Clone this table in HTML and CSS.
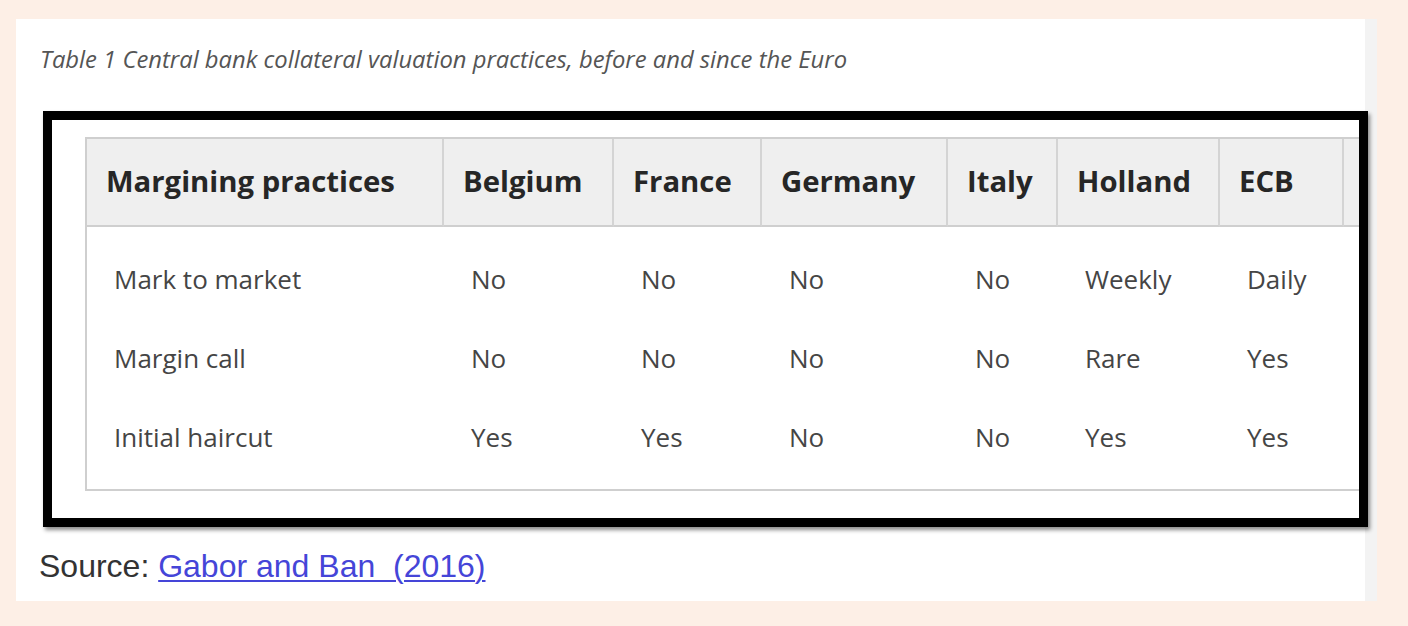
FILE: index.html
```html
<!DOCTYPE html>
<html lang="en">
<head>
<meta charset="utf-8">
<title>Central bank collateral valuation practices</title>
<link rel="stylesheet" href="styles.css">
</head>
<body>
<div class="card">
  <p class="caption">Table 1 Central bank collateral valuation practices, before and since the Euro</p>
  <div class="frame">
    <table class="practices">
      <colgroup>
        <col class="c1"><col class="c2"><col class="c3"><col class="c4"><col class="c5"><col class="c6"><col class="c7"><col class="c8">
      </colgroup>
      <thead>
        <tr>
          <th>Margining practices</th>
          <th>Belgium</th>
          <th>France</th>
          <th>Germany</th>
          <th>Italy</th>
          <th>Holland</th>
          <th>ECB</th>
          <th></th>
        </tr>
      </thead>
      <tbody>
        <tr class="first">
          <td>Mark to market</td><td>No</td><td>No</td><td>No</td><td>No</td><td>Weekly</td><td>Daily</td><td></td>
        </tr>
        <tr>
          <td>Margin call</td><td>No</td><td>No</td><td>No</td><td>No</td><td>Rare</td><td>Yes</td><td></td>
        </tr>
        <tr class="last">
          <td>Initial haircut</td><td>Yes</td><td>Yes</td><td>No</td><td>No</td><td>Yes</td><td>Yes</td><td></td>
        </tr>
      </tbody>
    </table>
  </div>
  <p class="source">Source: <a href="#">Gabor and Ban&nbsp; (2016)</a></p>
</div>
</body>
</html>
```

FILE: styles.css
```css
html, body {
  margin: 0;
  padding: 0;
}
body {
  background: #fdefe6;
  width: 1408px;
  height: 626px;
  overflow: hidden;
}
.card {
  margin: 19px 0 0 16px;
  width: 1349px;
  height: 558px;
  background: #ffffff;
  border-right: 12px solid #f3f3f3;
  padding-top: 24px;
  box-sizing: content-box;
}
.caption {
  margin: 0 0 36px 24px;
  font-family: "Open Sans", sans-serif;
  font-style: italic;
  font-weight: 400;
  font-size: 23.8px;
  line-height: 32px;
  color: #555555;
}
.frame {
  margin-left: 27px;
  width: 1325px;
  height: 416px;
  box-sizing: border-box;
  border: 9px solid #000;
  box-shadow: 2px 3px 4px rgba(0, 0, 0, 0.45);
  padding: 17px 0 0 33px;
  overflow: hidden;
  background: #fff;
}
.practices {
  table-layout: fixed;
  width: 1459px;
  border-collapse: separate;
  border-spacing: 0;
  border: 2px solid #cfcfcf;
  border-right: none;
  font-family: "Open Sans", sans-serif;
}
.c1 { width: 357px; }
.c2 { width: 170px; }
.c3 { width: 148px; }
.c4 { width: 186px; }
.c5 { width: 110px; }
.c6 { width: 162px; }
.c7 { width: 124px; }
.c8 { width: 200px; }
.practices th {
  background: #efefef;
  text-align: left;
  font-weight: 700;
  font-size: 29.3px;
  line-height: 40px;
  color: #262626;
  padding: 22px 0 24px 19px;
  border-right: 2px solid #d4d4d4;
  border-bottom: 2px solid #cfcfcf;
  white-space: nowrap;
}
.practices td {
  font-size: 26px;
  line-height: 34px;
  color: #454545;
  padding: 22px 0 23px 27px;
  white-space: nowrap;
}
.practices tr.first td {
  padding-top: 35px;
}
.practices tr.last td {
  padding-bottom: 35px;
}
.source {
  margin: 21px 0 0 23px;
  font-family: "Liberation Sans", Arial, sans-serif;
  font-size: 32px;
  line-height: 37px;
  color: #333;
}
.source a {
  color: #4545d8;
  text-decoration: underline;
  text-decoration-thickness: 2px;
  text-underline-offset: 3px;
}
```
